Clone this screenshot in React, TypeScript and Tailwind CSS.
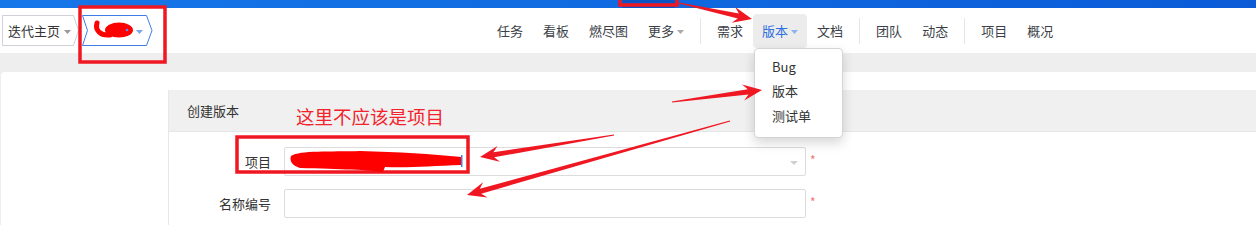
import React from 'react';

const FONT = { fontFamily: '"Microsoft YaHei", "Noto Sans CJK SC", "Noto Sans", sans-serif' };

type Item = { label: string; caret?: boolean; active?: boolean } | 'sep';

const NAV: Item[] = [
  { label: '任务' },
  { label: '看板' },
  { label: '燃尽图' },
  { label: '更多', caret: true },
  'sep',
  { label: '需求' },
  { label: '版本', caret: true, active: true },
  { label: '文档' },
  'sep',
  { label: '团队' },
  { label: '动态' },
  'sep',
  { label: '项目' },
  { label: '概况' },
];

function Caret({ color }: { color: string }) {
  return (
    <svg width="7" height="4" viewBox="0 0 7 4" className="ml-[2px] mt-[2px]">
      <path d="M0 0h7L3.5 4z" fill={color} />
    </svg>
  );
}

// tapered screenshot-annotation arrow, tail -> tip
function arrowPoints(x1: number, y1: number, x2: number, y2: number) {
  const dx = x2 - x1;
  const dy = y2 - y1;
  const len = Math.hypot(dx, dy);
  const ux = dx / len;
  const uy = dy / len;
  const nx = -uy;
  const ny = ux;
  const H = 19;
  const W = 8;
  const bx = x2 - ux * H;
  const by = y2 - uy * H;
  const jx = x2 - ux * (H - 5);
  const jy = y2 - uy * (H - 5);
  const p = (x: number, y: number) => `${x.toFixed(1)},${y.toFixed(1)}`;
  return [
    p(x1 + nx * 0.6, y1 + ny * 0.6),
    p(jx + nx * 2.6, jy + ny * 2.6),
    p(bx + nx * W, by + ny * W),
    p(x2, y2),
    p(bx - nx * W, by - ny * W),
    p(jx - nx * 2.6, jy - ny * 2.6),
    p(x1 - nx * 0.6, y1 - ny * 0.6),
  ].join(' ');
}

function Breadcrumbs() {
  return (
    <div className="flex items-center pl-[2px]">
      <div className="relative h-[31px] w-[77px] flex items-center pl-[6px]">
        <svg className="absolute inset-0" width="77" height="31">
          <polygon points="0.5,0.5 71.5,0.5 76.5,15.5 71.5,30.5 0.5,30.5" fill="#fff" stroke="#cfd0d9" />
        </svg>
        <span className="relative text-[13px] text-[#333]">迭代主页</span>
        <span className="relative ml-[2px]"><Caret color="#9a9a9a" /></span>
      </div>
      <div className="relative ml-[3px] h-[31px] w-[71px] flex items-center pl-[52px]">
        <svg className="absolute inset-0" width="71" height="31">
          <polygon points="0.5,0.5 64.5,0.5 70,15.5 64.5,30.5 0.5,30.5 5.5,15.5" fill="#fff" stroke="#3d7fe6" />
        </svg>
        <span className="relative"><Caret color="#7aa6ee" /></span>
      </div>
    </div>
  );
}

function NavBar() {
  return (
    <div className="h-[45px] bg-white flex items-center text-[13px] text-[#3c3f48]">
      <Breadcrumbs />
      <div className="ml-[334px] flex items-center h-full">
        {NAV.map((it, i) =>
          it === 'sep' ? (
            <div key={i} className="mx-[6px] w-px h-[26px] bg-[#e6e6e6]" />
          ) : (
            <div
              key={i}
              className={
                it.active
                  ? 'h-[34px] px-[9px] flex items-center rounded-[4px] bg-[#ececec] text-[#2f6fe0]'
                  : 'h-[34px] px-[10px] flex items-center'
              }
            >
              <span>{it.label}</span>
              {it.caret && <span className="ml-[1px]"><Caret color={it.active ? '#8fb2ef' : '#aaaaaa'} /></span>}
            </div>
          )
        )}
      </div>
    </div>
  );
}

function Row({ label, select }: { label: string; select?: boolean }) {
  return (
    <div className="flex items-center">
      <div className="w-[102px] text-right text-[13px] text-[#333]">{label}</div>
      <div className="relative ml-[13px] w-[522px] h-[29px] border border-[#dcdcdc] rounded-[2px] bg-white">
        {select && (
          <svg className="absolute right-[7px] top-[13px]" width="8" height="4" viewBox="0 0 8 4">
            <path d="M0 0h8L4 4z" fill="#d0d0d0" />
          </svg>
        )}
      </div>
      <span className="ml-[4px] -mt-[3px] text-[12px] text-[#f37474]">*</span>
    </div>
  );
}

function Dropdown() {
  return (
    <div className="absolute left-[754px] top-[48px] w-[89px] pt-[5px] pb-[9px] bg-white border border-[#d4d4d4] rounded-[4px] shadow-[0_5px_12px_rgba(0,0,0,0.16)] text-[13px] text-[#333]">
      {['Bug', '版本', '测试单'].map((t) => (
        <div key={t} className="h-[24.5px] flex items-center pl-[17px]">{t}</div>
      ))}
    </div>
  );
}

function Annotations() {
  const red = '#ef1722';
  return (
    <>
      <svg className="absolute inset-0 pointer-events-none" width="1256" height="225">
        {/* boxes */}
        <rect x="620" y="-4" width="57" height="9" fill="none" stroke={red} strokeWidth="3.5" />
        <rect x="80" y="7" width="85" height="55" fill="none" stroke={red} strokeWidth="3.5" />
        <rect x="237" y="137" width="231" height="35" fill="none" stroke={red} strokeWidth="3.5" />
        {/* scribble over breadcrumb */}
        <path d="M97 23 C 95 30, 100 36, 110 35" fill="none" stroke="#ff0000" strokeWidth="5" strokeLinecap="round" />
        <ellipse cx="119" cy="30" rx="14" ry="7.5" fill="#ff0000" />
        <circle cx="127" cy="30" r="1.3" fill="#5b8de8" />
        {/* scribble over project name */}
        <path
          d="M291 156 C 300 150, 330 152, 360 151 C 400 152, 430 154, 462 157 L 462 165 C 430 166, 410 168, 385 167 L 383 172 C 370 170, 340 169, 300 168 C 293 166, 289 161, 291 156 Z"
          fill="#ff0000"
        />
        <rect x="461" y="155" width="1.5" height="12" fill="#4a7de0" />
        {/* arrows */}
        <polygon points={arrowPoints(679, 3, 752, 19)} fill={red} />
        <polygon points={arrowPoints(672, 102, 762, 90)} fill={red} />
        <polygon points={arrowPoints(614, 135, 480, 157)} fill={red} />
        <polygon points={arrowPoints(730, 121, 467, 195)} fill={red} />
      </svg>
      <div className="absolute left-[296px] top-[104px] text-[18.5px] leading-[24px] text-[#f2232b] pointer-events-none">
        这里不应该是项目
      </div>
    </>
  );
}

export default function App() {
  return (
    <div className="relative w-[1256px] h-[225px] overflow-hidden bg-[#eeeeee] flex flex-col" style={FONT}>
      <div className="relative h-[8px] bg-linear-to-r from-[#1677e9] to-[#0b5bd7]">
        <div className="absolute left-[622px] top-0 h-full w-[53px] bg-[#0a54c6]" />
      </div>
      <NavBar />
      <div className="h-[19px]" />
      <div className="flex-1 ml-[1px] bg-white rounded-tl-[4px] pt-[18px] pl-[167px] flex">
        <div className="flex-1 border-l border-[#e8e8e8]">
          <div className="h-[42px] bg-[#f0f0f0] border-b border-[#e6e6e6] flex items-center pl-[18px] text-[13px] text-[#333]">
            创建版本
          </div>
          <div className="pt-[15px] flex flex-col gap-[13px]">
            <Row label="项目" select />
            <Row label="名称编号" />
          </div>
        </div>
      </div>
      <Dropdown />
      <Annotations />
    </div>
  );
}
